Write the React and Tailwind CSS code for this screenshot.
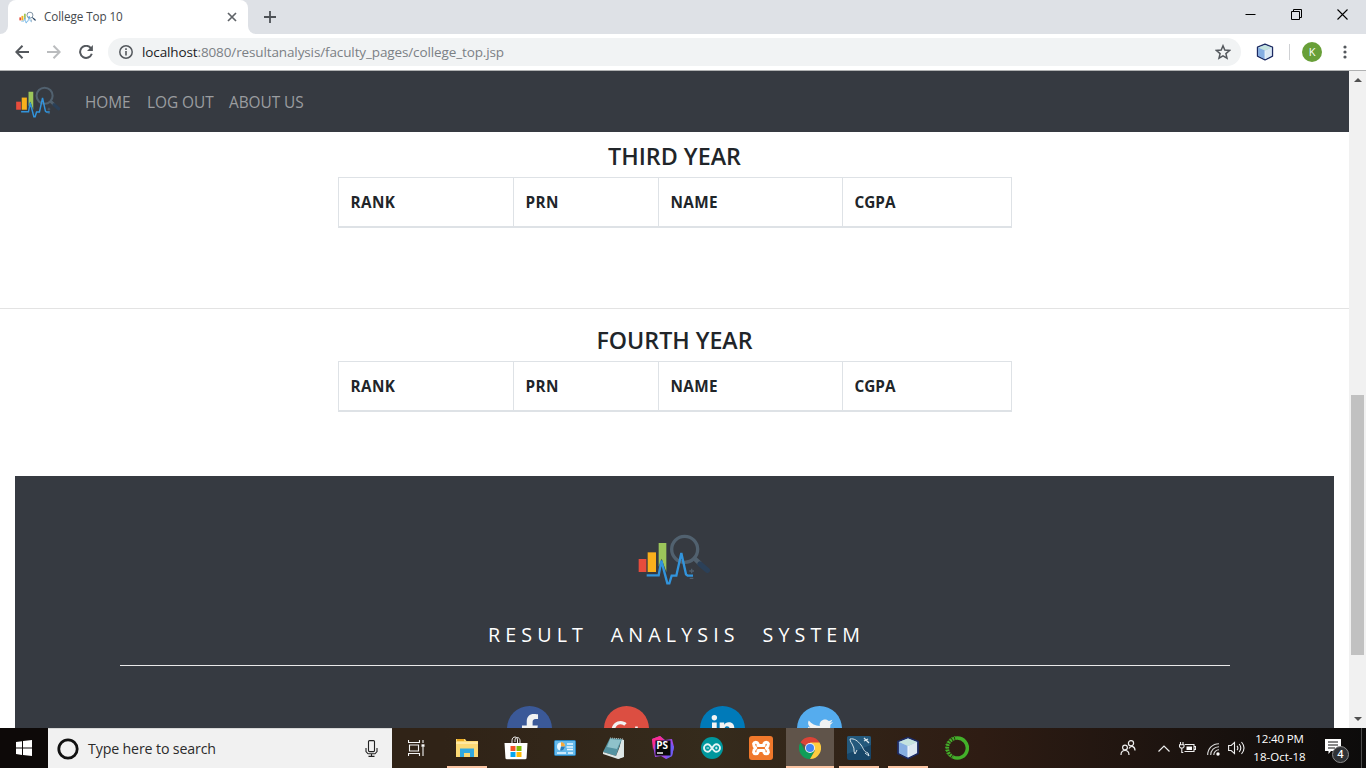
import React from "react";
import { FaFacebookF, FaLinkedinIn, FaTwitter, FaGooglePlusG } from "react-icons/fa";

function Logo({ className, handle = "#2b4058", ring = "#51616f" }) {
  return (
    <svg viewBox="51 36 222 165" className={className} fill="none">
      <rect x="56" y="117" width="23" height="39" fill="#e74c3c" />
      <path d="M83 97h25v59H83z" fill="#f9b01c" />
      <path d="M116 69h23v87l-14-40-9 24z" fill="#9cc65a" />
      <circle cx="194" cy="88" r="39" stroke={ring} strokeWidth="10" />
      <path d="M221 113l20 19" stroke={ring} strokeWidth="14" />
      <path d="M240 132l22 19" stroke={handle} strokeWidth="16" strokeLinecap="round" />
      <path d="M80 166h36l8-44 18 68h6l7-23h14l15-68 14 64 5 4h16" stroke="#3294dc" strokeWidth="7" />
      <path d="M208 153h14M215 146v14M209 175h11" stroke="#50606f" strokeWidth="4" />
    </svg>
  );
}

function Cube({ className }) {
  return (
    <svg viewBox="0 0 24 24" className={className} strokeLinejoin="round">
      <path d="M12 1.5L22 5.5V17.5L12 22.5L2 17.5V5.5Z" fill="#a5c3ea" stroke="#1d2a62" strokeWidth="1.8" />
      <path d="M3 6L12 10V21.5L3 17Z" fill="#86aee2" />
      <path d="M21 6L12 10V21.5L21 17Z" fill="#dce8f3" />
      <path d="M12 2.5L21 6L12 10L3 6Z" fill="#c5e3df" />
      <path d="M12 10V21" stroke="#f3f8ff" strokeWidth="1" />
    </svg>
  );
}

function Tab() {
  return (
    <div className="flex h-[34px] shrink-0 bg-[#dee1e6]">
      <div className="flex w-2 items-end bg-white">
        <div className="h-full w-2 rounded-br-lg bg-[#dee1e6]" />
      </div>
      <div className="bg-[#dee1e6]">
        <div className="flex h-[34px] w-[240px] items-center rounded-t-lg bg-white pl-[11px] pr-[11px]">
          <Logo className="h-[13px] w-[17px]" handle="#243f60" ring="#61788e" />
          <span className="ml-2 grow whitespace-nowrap text-[11.7px] tracking-[-0.08px] text-[#45494d]">College Top 10</span>
          <svg viewBox="0 0 10 10" className="h-[10px] w-[10px]" stroke="#5f6368" strokeWidth="1.7"><path d="M1 1l8 8M9 1L1 9" /></svg>
        </div>
      </div>
      <div className="w-2 bg-white"><div className="h-full rounded-bl-lg bg-[#dee1e6]" /></div>
      <svg viewBox="0 0 12 12" className="ml-2 mt-[11px] h-3 w-3" stroke="#4d5156" strokeWidth="1.8"><path d="M6 0v12M0 6h12" /></svg>
      <div className="ml-auto flex gap-[35px] pr-[18px] pt-[9px]">
        <svg viewBox="0 0 11 11" className="h-[11px] w-[11px]" stroke="#000"><path d="M0.5 5.5h10" /></svg>
        <svg viewBox="0 0 11 11" className="h-[11px] w-[11px]" fill="none" stroke="#000"><path d="M.5 2.5h8v8h-8zM2.5 2.5v-2h8v8h-2" /></svg>
        <svg viewBox="0 0 11 11" className="h-[11px] w-[11px]" stroke="#000" strokeWidth="1.1"><path d="M.5.5l10 10M10.5.5l-10 10" /></svg>
      </div>
    </div>
  );
}

function Toolbar() {
  return (
    <div className="flex h-[37px] shrink-0 items-center border-b border-[#b0b1b2] bg-white pl-[15px]">
      <svg viewBox="0 0 14 14" className="h-[14px] w-[14px]" fill="none" stroke="#54585d" strokeWidth="2"><path d="M14 7H1.5M7.5 .8L1.3 7l6.2 6.2" /></svg>
      <svg viewBox="0 0 14 14" className="ml-[18px] h-[14px] w-[14px]" fill="none" stroke="#babcbe" strokeWidth="2"><path d="M0 7h12.5M6.5 .8L12.7 7l-6.2 6.2" /></svg>
      <svg viewBox="0 0 14 14" className="ml-[18px] h-[14px] w-[14px]" fill="none" stroke="#54585d" strokeWidth="2"><path d="M11.8 3.1A6 6 0 1 0 12.8 8.8" /><path d="M13.9 0v6H8z" fill="#54585d" stroke="none" /></svg>
      <div className="ml-[15px] flex h-7 w-[1133px] items-center rounded-full bg-[#f1f3f4] pl-[11px] pr-[10px]">
        <svg viewBox="0 0 14 14" className="h-[14px] w-[14px]" fill="none" stroke="#54585d" strokeWidth="1.5"><circle cx="7" cy="7" r="6.2" /><path d="M7 6v4.5M7 3.3v1.6" strokeWidth="1.6" /></svg>
        <span className="ml-[9px] grow whitespace-nowrap pt-px text-[13.5px] tracking-[-0.12px] text-[#7b8085]"><span className="text-[#202124]">localhost</span>:8080/resultanalysis/faculty_pages/college_top.jsp</span>
        <svg viewBox="0 0 16 16" className="h-4 w-4" fill="none" stroke="#54585d" strokeWidth="1.5"><path d="M8 1.8l1.8 4.3 4.7.4-3.6 3.1 1.1 4.6L8 11.8l-4 2.4 1.1-4.6-3.6-3.1 4.7-.4z" /></svg>
      </div>
      <Cube className="ml-[15px] h-[18px] w-[18px]" />
      <div className="ml-[15px] h-4 w-px bg-[#cfd1d4]" />
      <div className="ml-3 flex h-5 w-5 items-center justify-center rounded-full bg-[#689f38] text-[11px] text-white">K</div>
      <svg viewBox="0 0 4 14" className="ml-[21px] h-[14px] w-1" fill="#54585d"><circle cx="2" cy="2" r="1.6" /><circle cx="2" cy="7" r="1.6" /><circle cx="2" cy="12" r="1.6" /></svg>
    </div>
  );
}

function Table() {
  return (
    <div className="mx-auto flex h-[51px] w-[674px] border border-b-2 border-[#dee2e6] text-[15.3px] font-bold leading-[48px] tracking-[0.4px] text-[#212529]">
      <div className="w-[175px] border-r border-[#dee2e6] pl-3">RANK</div>
      <div className="w-[145px] border-r border-[#dee2e6] pl-3">PRN</div>
      <div className="w-[184px] border-r border-[#dee2e6] pl-3">NAME</div>
      <div className="pl-3 tracking-[0px]">CGPA</div>
    </div>
  );
}

function Page() {
  return (
    <div className="flex h-[657px] shrink-0 overflow-hidden bg-white">
      <div className="w-[1349px]">
        <nav className="flex h-[61px] items-center bg-[#363a41] pl-[15px] text-[15.4px] tracking-[-0.04px] text-[#9b9da0]">
          <Logo className="h-[34px] w-[46px]" />
          <div className="ml-6 flex pt-[3px]">
            <span className="w-[62px] whitespace-nowrap">HOME</span>
            <span className="w-[82px] whitespace-nowrap">LOG OUT</span>
            <span className="whitespace-nowrap">ABOUT US</span>
          </div>
        </nav>
        <h4 className="mt-[10px] h-[35px] text-center text-[23.3px] font-semibold leading-[29px] text-[#212529]">THIRD YEAR</h4>
        <Table />
        <div className="mt-20 h-px bg-[#e3e3e3]" />
        <h4 className="mt-[17px] h-[35px] text-center text-[23.2px] font-semibold leading-[29px] text-[#212529]">FOURTH YEAR</h4>
        <Table />
        <footer className="ml-[15px] mt-16 h-[260px] w-[1319px] bg-[#363a41] pt-[56px]">
          <Logo className="ml-[622px] h-[55px] w-[74px]" />
          <p className="ml-[473px] mt-[34px] whitespace-nowrap text-[19.7px] leading-7 tracking-[5.1px] text-white [word-spacing:12.6px]">RESULT ANALYSIS SYSTEM</p>
          <div className="ml-[105px] mt-4 h-px w-[1110px] bg-[#e9e9e9]" />
          <div className="ml-[492px] mt-10 flex gap-[51.7px] text-[#f1f2f2]">
            <div className="flex h-[45px] w-[45px] justify-center rounded-full bg-[#3b5998] pt-2"><FaFacebookF className="h-[30px] w-[22px]" /></div>
            <div className="flex h-[45px] w-[45px] justify-center rounded-full bg-[#dc4e41] pt-[9px]"><FaGooglePlusG className="h-[30px] w-[30px]" /></div>
            <div className="flex h-[45px] w-[45px] justify-center rounded-full bg-[#007ab9] pt-[9px]"><FaLinkedinIn className="h-[26px] w-[26px]" /></div>
            <div className="flex h-[45px] w-[45px] justify-center rounded-full bg-[#55acee] pt-[11px]"><FaTwitter className="h-[26px] w-[26px]" /></div>
          </div>
        </footer>
      </div>
      <div className="flex w-[17px] flex-col items-center bg-[#f1f1f1]">
        <svg viewBox="0 0 8 4" className="mt-[7px] h-1 w-2" fill="#505050"><path d="M0 4L4 0l4 4z" /></svg>
        <div className="mt-[313px] h-[260px] w-[13px] bg-[#c1c1c1]" />
        <svg viewBox="0 0 8 4" className="mb-[7px] mt-auto h-1 w-2" fill="#505050"><path d="M0 0l4 4 4-4z" /></svg>
      </div>
    </div>
  );
}

function Slot({ children, open, active }) {
  return (
    <div className={`flex h-10 w-12 flex-col items-center ${active ? "bg-[#60544a]" : ""}`}>
      <div className="flex h-[38px] w-full items-center justify-center pt-[2px]">{children}</div>
      {(open || active) && <div className={`h-[2px] bg-[#fbc5a3] ${active ? "w-12" : "w-10"}`} />}
    </div>
  );
}

function Taskbar() {
  return (
    <div className="flex h-10 shrink-0 bg-[#0d0908] text-white">
      <div className="flex w-12 items-center justify-center">
        <svg viewBox="0 0 16 16" className="h-4 w-4" fill="#fff"><path d="M0 2l6-.8v6.4H0zM7 1l9-1v7.6H7zM0 8.5h6v6.4L0 14zM7 8.5h9V16l-9-1z" /></svg>
      </div>
      <div className="flex w-[344px] items-center border-t border-[#d7d7d7] bg-[#f1f1f1] pl-[9px] pr-[14px]">
        <svg viewBox="0 0 22 22" className="h-[22px] w-[22px]" fill="none" stroke="#111" strokeWidth="2.8"><circle cx="11" cy="11" r="9.2" /></svg>
        <span className="ml-[9px] grow whitespace-nowrap text-[14.2px] tracking-[-0.14px] text-[#2b2b2b]">Type here to search</span>
        <svg viewBox="0 0 13 17" className="h-[17px] w-[13px]" fill="none" stroke="#222" strokeWidth="1.1"><rect x="3.5" y=".6" width="6" height="11" rx="1" /><path d="M1 8v3.5l2 2.3h7l2-2.3V8M6.5 14v2.4M3.5 16.4h6" /></svg>
      </div>
      <div className="flex w-[51px] bg-[#302317]">
        <div className="flex w-12 items-center justify-center">
          <svg viewBox="0 0 17 16" className="h-4 w-[17px]" fill="none" stroke="#f4f4f4" strokeWidth="1.1"><path d="M.5 0v2.5h11V0M1.5 5h9v6h-9zM.5 16v-2.5h11V16M15 0v3M15 7v9" /><path d="M13.5 4.3h3v2.5h-3z" fill="#fff" stroke="none" /></svg>
        </div>
      </div>
      <div className="flex gap-px bg-linear-to-r from-[#302317] via-[#352b1c] via-50% to-[#2e1c13]">
        <Slot open>
          <svg viewBox="0 0 22 20" className="h-5 w-[22px]"><path d="M0 1h9l1.5 2H22v16H0z" fill="#fbd975" /><path d="M1 1h7v2H1z" fill="#e8a820" /><path d="M0 4h22v2H0z" fill="#ffe8a0" /><path d="M4 19v-8.5h14V19h-4v-4H8v4z" fill="#31a9e0" /></svg>
        </Slot>
        <Slot>
          <svg viewBox="0 0 24 24" className="h-6 w-6"><path d="M8 8V4.5C8 2 9.5 1 11 1s2.5 1.2 2.5 3V8M11 6V4.5C11 2.5 12.2 1.5 13.5 1.5S16 3 16 4.5V8" fill="none" stroke="#eee" /><path d="M.5 7h23l-1 15.5-1 .8h-19l-1-.8z" fill="#fff" /><path d="M6.5 10h5v5h-5z" fill="#f35325" /><path d="M12.5 10h5v5h-5z" fill="#81bc06" /><path d="M6.5 16h5v5h-5z" fill="#05a6f0" /><path d="M12.5 16h5v5h-5z" fill="#ffba08" /></svg>
        </Slot>
        <Slot>
          <svg viewBox="0 0 22 16" className="h-4 w-[22px]"><rect x=".5" y=".5" width="21" height="15" rx="1" fill="#64b9ec" stroke="#2883bd" /><circle cx="7" cy="6.5" r="4" fill="#e6f6ff" /><path d="M7 6.5V2a4.5 4.5 0 0 1 4 4.5z" fill="#f5a83b" /><path d="M7 6.5h4a4 4 0 0 1-5 4z" fill="#277dbd" /><path d="M13 4h6M12.5 7h6.5M13 9.5h6M3 13h9M14 13h5" stroke="#eaf8ff" strokeWidth="1.3" /></svg>
        </Slot>
        <Slot>
          <svg viewBox="0 0 24 24" className="h-6 w-6"><path d="M19 3l3 1 0 17-6 2z" fill="#d8e4e4" /><path d="M8 2l12 1-6 17-13-4z" fill="#5492a0" /><path d="M8 3l11 1-4 9-10-2z" fill="#8fc2ca" /><path d="M1 16l13 4 6-15 1 16-5 2L1 18z" fill="#dfe7e6" /><path d="M8 2l13 1" stroke="#aeb8b7" strokeDasharray="1 1" /></svg>
        </Slot>
        <Slot>
          <svg viewBox="0 0 24 24" className="h-6 w-6"><path d="M1 3L9 0l5 4 7-1 2 8-2 9-6 3-5-3-6 1-1-6z" fill="#9f49e8" /><path d="M1 3L9 0l4 4-9 4-2 6z" fill="#fa2c91" /><path d="M19 6l4 5-2 9-6 3z" fill="#6d5cf2" /><path d="M4.5 4.5h15v15h-15z" fill="#080808" /><text x="5.3" y="13" fontSize="10" fontWeight="700" fontFamily="Open Sans" fill="#fff">PS</text><path d="M6 16.3h6v1.4H6z" fill="#fff" /></svg>
        </Slot>
        <Slot><div className="flex h-[22px] w-[22px] items-center justify-center rounded-full bg-[#00979d]"><svg viewBox="0 0 18 10" className="h-[10px] w-[18px]" fill="none" stroke="#e5f4f4" strokeWidth="1.9"><path d="M9 5C7 2 6.2 1.2 4.8 1.2a3.8 3.8 0 0 0 0 7.6C6.2 8.8 7 8 9 5s2.8-3.8 4.2-3.8a3.8 3.8 0 0 1 0 7.6C11.8 8.8 11 8 9 5z" /><path d="M3.5 5h2.6M12 5h2.6M13.3 3.7v2.6" strokeWidth="1" /></svg></div></Slot>
        <Slot><div className="flex h-6 w-6 items-center justify-center rounded-[3px] bg-[#f0782b]"><svg viewBox="0 0 20 18" className="h-[18px] w-5" fill="none" stroke="#fff" strokeWidth="3" strokeLinejoin="round" strokeLinecap="round"><path d="M7 6.5H13M7 11.5h6M7 6.5V4.8A2.3 2.3 0 0 0 2.6 4.8C2.6 7 3.6 8.2 4.6 9c-1 .8-2 2-2 4.2a2.3 2.3 0 0 0 4.4 0v-1.7M13 6.5V4.8a2.3 2.3 0 0 1 4.4 0C17.4 7 16.4 8.2 15.4 9c1 .8 2 2 2 4.2a2.3 2.3 0 0 1-4.4 0v-1.7" /></svg></div></Slot>
        <Slot active>
          <svg viewBox="0 0 22 22" className="h-[22px] w-[22px]"><path d="M11 11L1.47 5.5A11 11 0 0 1 20.53 5.5z" fill="#db4437" /><path d="M1.47 5.5A11 11 0 0 0 11 22l4.8-8.3L11 11 6.2 13.7z" fill="#0f9d58" /><path d="M20.53 5.5A11 11 0 0 1 11 22l4.8-8.3L11 5.5z" fill="#ffcd40" /><circle cx="11" cy="11" r="5" fill="#f1f1f1" /><circle cx="11" cy="11" r="4" fill="#4285f4" /></svg>
        </Slot>
        <Slot open>
          <svg viewBox="0 0 24 24" className="h-6 w-6" fill="none"><rect width="24" height="24" rx="2" fill="#184668" /><path d="M0 2q0-2 2-2h20q2 0 2 2v7L0 18z" fill="#24597c" /><path d="M3 3c4-1 8 2 11 6s2 6 7 8l1 3-4-3M3 3c0 3 2 4 3 7 2 3 0 5 2 8l2-4" stroke="#d8e4e9" strokeWidth="1" /><path d="M17 2l5 5M17 5l4-2" stroke="#dbe5ea" strokeWidth="1.3" /></svg>
        </Slot>
        <Slot open><Cube className="h-6 w-6" /></Slot>
        <Slot>
          <svg viewBox="0 0 24 24" className="h-6 w-6" fill="none" stroke="#43b02a"><path d="M12 2a10 10 0 1 1-4 19" strokeWidth="3.5" /><path d="M12 2A10 10 0 0 0 8 21" strokeWidth="3.5" strokeDasharray="2 .8" /><path d="M10 .5A11.5 11.5 0 0 0 5 21" strokeWidth="1" strokeDasharray="1 2" /></svg>
        </Slot>
      </div>
      <div className="flex grow items-center justify-end bg-linear-to-r from-[#2e1c13] to-[#0c0b0b]">
        <svg viewBox="0 0 16 16" className="h-4 w-4" fill="none" stroke="#eee" strokeWidth="1.2"><circle cx="11" cy="3.2" r="2.6" /><circle cx="5" cy="7.5" r="2.4" /><path d="M1 15c0-6 8-6 8 0M9 8.5c2-3.5 6-2 6 2" /></svg>
        <svg viewBox="0 0 12 7" className="ml-[22px] h-[7px] w-3" fill="none" stroke="#eee" strokeWidth="1.2"><path d="M.5 6.5L6 1l5.5 5.5" /></svg>
        <svg viewBox="0 0 17 12" className="ml-[9px] h-3 w-[17px]" fill="none" stroke="#eee" strokeWidth="1.1"><path d="M6 2.5h9v7H5.5M15 4.5h1.5v3H15" /><path d="M7.5 4.5H13v3.5H7.5z" fill="#fff" stroke="none" /><path d="M1.5 0v2.5M4 0v2.5M.5 2.8h4.5v2L3.8 6H1.7L.5 4.8zM2.8 6v4.5h1.5" /></svg>
        <svg viewBox="0 0 13 13" className="ml-[11px] mt-[2px] h-[13px] w-[13px]" fill="none" stroke="#ddd" strokeWidth="1.1"><path d="M.7 12C.7 5.5 5.5.7 12 .7M3.7 12C3.7 7.2 7.2 3.7 12 3.7M6.8 12c0-3 2.2-5.2 5.2-5.2" /><circle cx="11" cy="11" r="1.7" fill="#fff" stroke="none" /></svg>
        <svg viewBox="0 0 17 14" className="ml-[8px] h-[14px] w-[17px]" fill="none" stroke="#eee" strokeWidth="1.1"><path d="M.6 4.5h2.6L6.5 1.4v11.2L3.2 9.5H.6zM9 4.8q1.8 2.2 0 4.4M11.2 3q3.2 4 0 8M13.5 1q5 6 0 12" /></svg>
        <div className="ml-[7px] mr-px w-[55px] whitespace-nowrap text-center text-[11.5px] leading-[18px] tracking-[-0.15px]"><div>12:40 PM</div><div className="tracking-[0px]">18-Oct-18</div></div>
        <div className="relative ml-[17px] mr-5 h-5 w-4">
          <svg viewBox="0 0 16 16" className="h-4 w-4"><path d="M0 1h16v12H6l-2.5 3v-3H0z" fill="#fff" /><path d="M3 4h10M3 7h10M3 10h7" stroke="#111" /></svg>
          <div className="absolute left-[7px] top-[8px] flex h-[17px] w-[17px] items-center justify-center rounded-full border border-[#8b8b8b] bg-[#303235] text-[11px] font-semibold">4</div>
        </div>
        <div className="h-10 w-px bg-[#4b4b4b]" /><div className="w-1" />
      </div>
    </div>
  );
}

export default function App() {
  return (
    <div className="flex h-[768px] w-[1366px] flex-col overflow-hidden font-['Open_Sans','Noto_Sans',sans-serif]">
      <Tab />
      <Toolbar />
      <Page />
      <Taskbar />
    </div>
  );
}
